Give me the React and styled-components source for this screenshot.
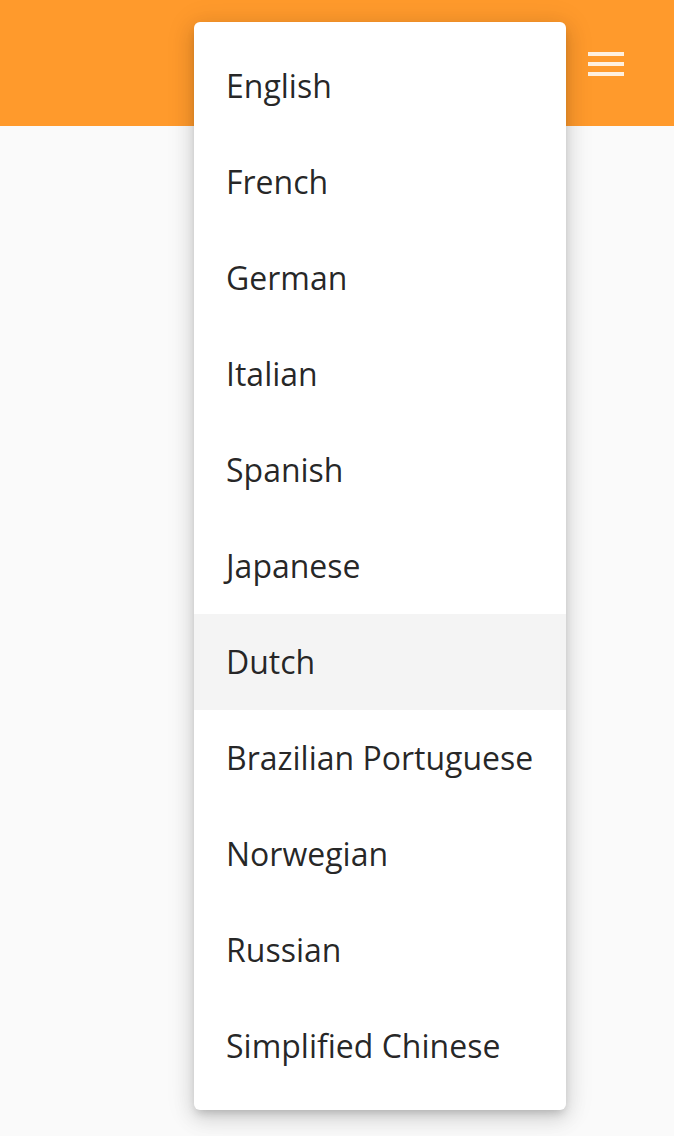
import styled, { createGlobalStyle } from 'styled-components';

const GlobalStyle = createGlobalStyle`
  html, body {
    margin: 0;
    padding: 0;
    background: #fafafa;
    font-family: "Open Sans", Lato, sans-serif;
  }
`;

const Page = styled.div`
  position: relative;
  width: 674px;
  height: 1136px;
  background: #fafafa;
  overflow: hidden;
`;

const AppBar = styled.header`
  height: 126px;
  background: #ff9a2c;
  display: flex;
  justify-content: flex-end;
  align-items: flex-start;
  padding: 52px 50px 0 0;
  box-sizing: border-box;
`;

const MenuButton = styled.button`
  display: flex;
  flex-direction: column;
  gap: 6px;
  padding: 0;
  border: 0;
  background: none;
  cursor: pointer;
`;

const Bar = styled.span`
  display: block;
  width: 36px;
  height: 4px;
  background: rgba(255, 255, 255, 0.85);
`;

const Menu = styled.ul`
  position: absolute;
  top: 22px;
  left: 194px;
  width: 372px;
  margin: 0;
  padding: 16px 0;
  list-style: none;
  background: #fff;
  border-radius: 6px;
  box-shadow: 0 5px 10px -3px rgba(0, 0, 0, 0.2), 0 8px 20px 2px rgba(0, 0, 0, 0.1),
    0 3px 28px 4px rgba(0, 0, 0, 0.08);
`;

const Item = styled.li`
  height: 96px;
  display: flex;
  align-items: center;
  padding: 0 32px;
  font-size: 32px;
  line-height: 1;
  color: rgba(0, 0, 0, 0.86);
  background: ${(p) => (p.$active ? '#f4f4f4' : 'transparent')};
  white-space: nowrap;
`;

const languages = [
  'English',
  'French',
  'German',
  'Italian',
  'Spanish',
  'Japanese',
  'Dutch',
  'Brazilian Portuguese',
  'Norwegian',
  'Russian',
  'Simplified Chinese',
];

export default function App() {
  return (
    <Page>
      <GlobalStyle />
      <AppBar>
        <MenuButton aria-label='menu'>
          <Bar />
          <Bar />
          <Bar />
        </MenuButton>
      </AppBar>
      <Menu role='menu'>
        {languages.map((lang) => (
          <Item role='menuitem' key={lang} $active={lang === 'Dutch'}>
            {lang}
          </Item>
        ))}
      </Menu>
    </Page>
  );
}
